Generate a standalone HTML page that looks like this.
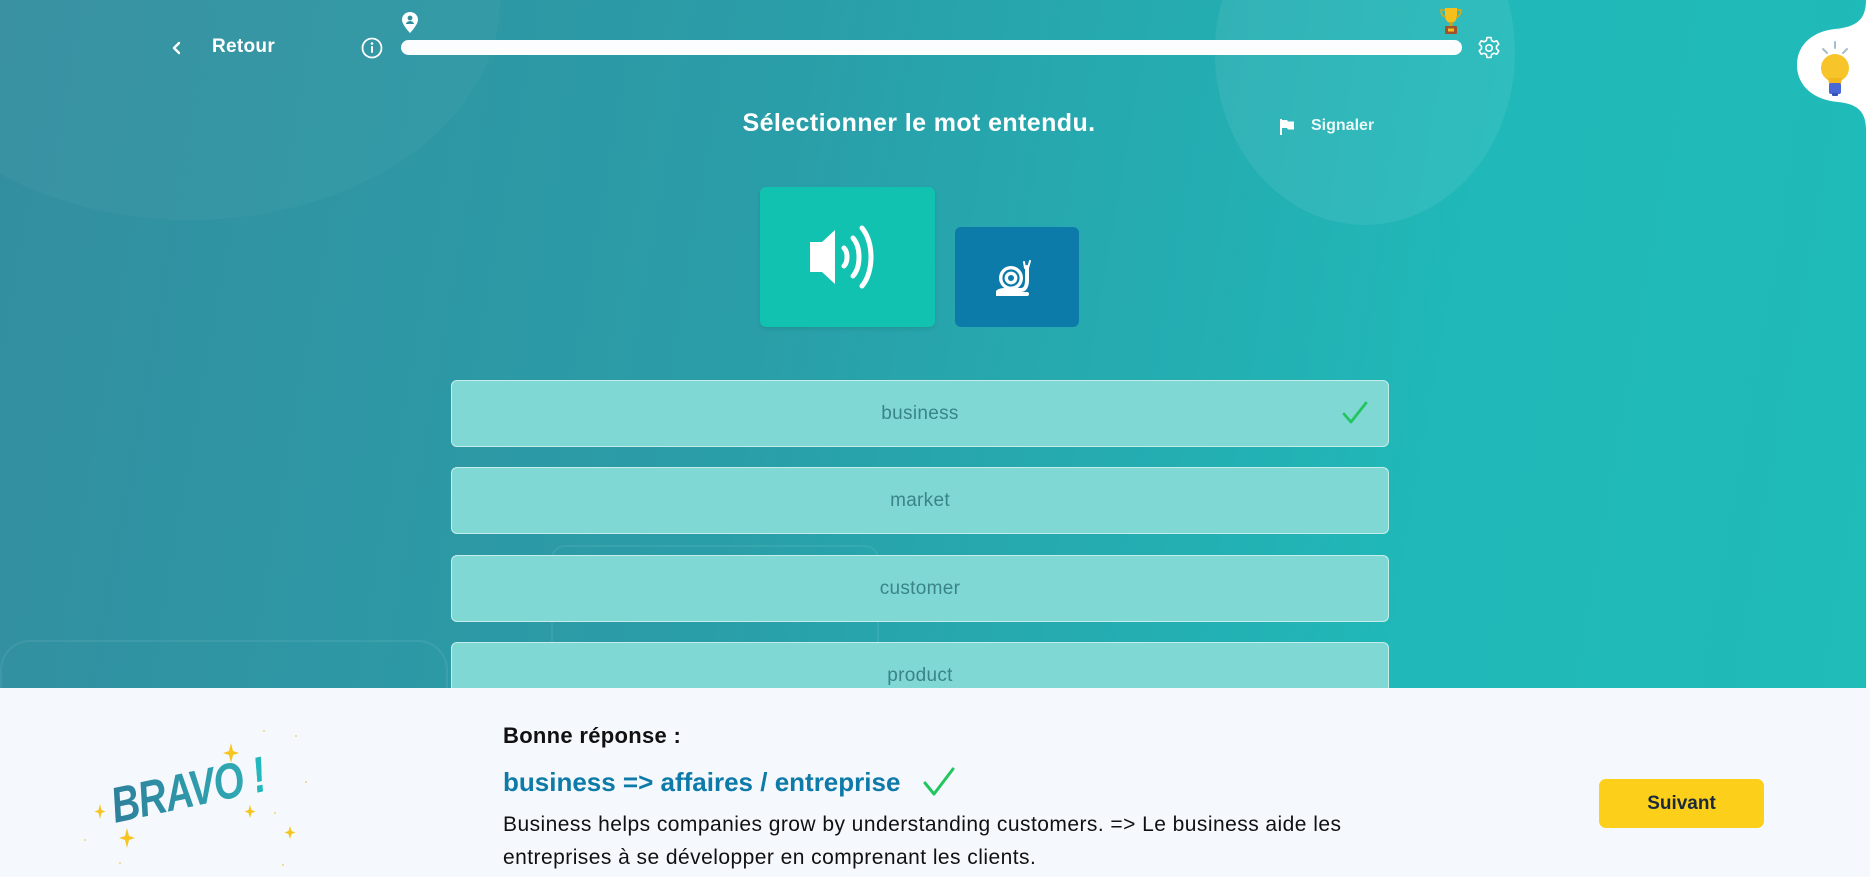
<!DOCTYPE html>
<html><head><meta charset="utf-8"><style>
*{margin:0;padding:0;box-sizing:border-box}
body{width:1870px;height:877px;overflow:hidden;font-family:"Liberation Sans",sans-serif;position:relative;background:linear-gradient(100deg,#338e9f 0%,#2a9ea8 40%,#20b8b8 75%,#1fbcb8 100%)}
.abs{position:absolute}
.opt{position:absolute;left:451px;width:938px;height:67px;background:#80d8d4;border:1px solid rgba(255,255,255,.55);border-radius:6px;color:#3a8489;font-size:19px;letter-spacing:.3px;text-align:center;line-height:65px}
</style></head><body>
<div class="abs" style="left:-120px;top:-220px;width:620px;height:440px;border-radius:50%;background:rgba(255,255,255,.03)"></div>
<div class="abs" style="left:1215px;top:-120px;width:300px;height:345px;border-radius:50%;background:rgba(255,255,255,.07)"></div>
<div class="abs" style="left:0;top:640px;width:448px;height:60px;border:2px solid rgba(255,255,255,.07);border-radius:30px 30px 0 0;border-bottom:none"></div>
<div class="abs" style="left:551px;top:545px;width:328px;height:160px;border:2px solid rgba(255,255,255,.07);border-radius:14px;border-bottom:none"></div>

<svg class="abs" style="left:170px;top:40px" width="14" height="16" viewBox="0 0 14 16"><path d="M9 3 L4 8 L9 13" stroke="#fff" stroke-width="2.4" fill="none" stroke-linecap="round" stroke-linejoin="round"/></svg>
<div class="abs" style="left:212px;top:36px;color:#fff;font-size:19px;font-weight:bold;letter-spacing:.3px">Retour</div>
<svg class="abs" style="left:361px;top:37px" width="22" height="22" viewBox="0 0 22 22"><circle cx="11" cy="11" r="9.5" stroke="#fff" stroke-width="1.8" fill="none"/><circle cx="11" cy="6.5" r="1.3" fill="#fff"/><rect x="10" y="9" width="2" height="7" rx="1" fill="#fff"/></svg>
<div class="abs" style="left:401px;top:40px;width:1061px;height:15px;border-radius:8px;background:#fbfdfe"></div>
<svg class="abs" style="left:402px;top:12px" width="16" height="21" viewBox="0 0 16 21"><path d="M8 0C3.6 0 0 3.4 0 7.7 0 12.5 8 21 8 21s8-8.5 8-13.3C16 3.4 12.4 0 8 0z" fill="#fff"/><circle cx="8" cy="6" r="2.4" fill="#2e8f9e"/><path d="M3.8 12c.8-2 2.4-3 4.2-3s3.4 1 4.2 3z" fill="#2e8f9e"/></svg>
<svg class="abs" style="left:1440px;top:7px" width="22" height="28" viewBox="0 0 22 28"><path d="M5 1h12v8c0 4-3 7-6 7s-6-3-6-7z" fill="#f5c01c"/><path d="M5 3H1c0 5 3 7 5 7M17 3h4c0 5-3 7-5 7" stroke="#e0a810" stroke-width="1.6" fill="none"/><rect x="9.5" y="15" width="3" height="4" fill="#d9a012"/><rect x="5" y="19" width="12" height="8" rx="1" fill="#a0522d"/><rect x="8" y="21.5" width="6" height="3" fill="#f5c01c"/></svg>
<svg class="abs" style="left:1477px;top:36px" width="24" height="24" viewBox="0 0 24 24"><path d="M10 1.5h4l.6 3 2.3 1.3 2.9-1 2 3.4-2.3 2v2.6l2.3 2-2 3.4-2.9-1-2.3 1.3-.6 3h-4l-.6-3-2.3-1.3-2.9 1-2-3.4 2.3-2v-2.6l-2.3-2 2-3.4 2.9 1 2.3-1.3z" stroke="#fff" stroke-width="1.6" fill="none" stroke-linejoin="round"/><circle cx="12" cy="12" r="3.2" stroke="#fff" stroke-width="1.6" fill="none"/></svg>

<svg class="abs" style="left:1790px;top:0" width="80" height="700" viewBox="0 0 80 700"><path d="M80 0 L80 700 L76 700 L76 130 C76 110 66 104 48 102 C25 100 7 87 7 65 C7 43 25 31 45 29 C66 27 76 20 76 0 Z" fill="#fff"/>
<g transform="translate(45,70)"><line x1="-12" y1="-21" x2="-8" y2="-17" stroke="#a8bccc" stroke-width="2" stroke-linecap="round"/><line x1="0" y1="-28" x2="0" y2="-22" stroke="#a8bccc" stroke-width="2" stroke-linecap="round"/><line x1="12" y1="-21" x2="8" y2="-17" stroke="#a8bccc" stroke-width="2" stroke-linecap="round"/><circle cx="0" cy="-2" r="14" fill="#f7c42a"/><path d="M-7 8h14l-1 6h-12z" fill="#f0b81e"/><rect x="-6" y="13" width="12" height="11" rx="2" fill="#4a67d6"/><rect x="-3" y="23" width="6" height="3" rx="1" fill="#3651b8"/></g></svg>

<div class="abs" style="left:580px;width:678px;top:109px;text-align:center;color:#fff;font-size:25px;font-weight:bold;letter-spacing:.4px">Sélectionner le mot entendu.</div>
<svg class="abs" style="left:1279px;top:118px" width="18" height="18" viewBox="0 0 18 18"><path d="M2 1v16" stroke="#fff" stroke-width="2"/><path d="M3 2h5l1 1.5h6v8H9l-1-1.5H3z" fill="#fff"/></svg>
<div class="abs" style="left:1311px;top:117px;color:#eafaf9;font-size:16px;font-weight:bold">Signaler</div>

<div class="abs" style="left:760px;top:187px;width:175px;height:140px;border-radius:6px;background:#12c2b0;box-shadow:0 2px 4px rgba(0,0,0,.1)"></div>
<svg class="abs" style="left:808px;top:224px" width="80" height="66" viewBox="0 0 80 66"><path d="M2 18h12l13-12v54L14 48H2z" fill="#fff"/><path d="M36 24c4 4 4 14 0 18" stroke="#fff" stroke-width="5" fill="none" stroke-linecap="round"/><path d="M45 14c8 9 8 29 0 38" stroke="#fff" stroke-width="5" fill="none" stroke-linecap="round"/><path d="M54 4c12 14 12 44 0 58" stroke="#fff" stroke-width="5" fill="none" stroke-linecap="round"/></svg>
<div class="abs" style="left:955px;top:227px;width:124px;height:100px;border-radius:6px;background:#0c7ba9"></div>
<svg class="abs" style="left:996px;top:259px" width="44" height="38" viewBox="0 0 44 38"><circle cx="15" cy="19" r="12" fill="#fff"/><circle cx="15" cy="19" r="7.5" fill="none" stroke="#0c7ba9" stroke-width="2.2"/><circle cx="15" cy="19" r="3" fill="#0c7ba9"/><path d="M1 35c0-3 4-4 8-4h16c4 0 6-4 6-10V8" stroke="#fff" stroke-width="4" fill="none" stroke-linecap="round"/><path d="M32 9l2-7M29 9l-1-6" stroke="#fff" stroke-width="2" stroke-linecap="round"/><path d="M1 35h30" stroke="#fff" stroke-width="4" stroke-linecap="round"/></svg>

<div class="opt" style="top:380px">business<svg style="position:absolute;right:20px;top:20px" width="26" height="24" viewBox="0 0 26 24"><path d="M2 13l7 8L24 2" stroke="#22c55e" stroke-width="2.8" fill="none" stroke-linecap="round" stroke-linejoin="round"/></svg></div>
<div class="opt" style="top:467px">market</div>
<div class="opt" style="top:555px">customer</div>
<div class="opt" style="top:642px">product</div>

<div class="abs" style="left:0;top:688px;width:1870px;height:189px;background:#f5f8fc"></div>
<div class="abs" style="left:188px;top:790px;transform:translate(-50%,-50%) rotate(-12deg) scaleX(.78);font-size:50px;font-weight:900;font-style:italic;letter-spacing:-1px;white-space:nowrap;background:linear-gradient(90deg,#2e7f9b,#2fb0b8);-webkit-background-clip:text;color:transparent">BRAVO<span style="color:#22b8bd"> !</span></div>
<svg class="abs" style="left:70px;top:720px" width="250" height="150" viewBox="0 0 250 150"><g fill="#f7c51f"><path d="M161 23l2 8 6 2-6 2-2 8-2-8-6-2 6-2z"/><path d="M57 108l2 8 6 2-6 2-2 8-2-8-6-2 6-2z"/><path d="M180 85l1.5 5 4 1.5-4 1.5-1.5 5-1.5-5-4-1.5 4-1.5z"/><path d="M220 106l1.5 5 4 1.5-4 1.5-1.5 5-1.5-5-4-1.5 4-1.5z"/><path d="M30 84l1.5 6 4 1.5-4 1.5-1.5 6-1.5-6-4-1.5 4-1.5z"/></g><g fill="#f2d27a"><circle cx="194" cy="11" r="1"/><circle cx="226" cy="16" r="1"/><circle cx="236" cy="62" r="1"/><circle cx="15" cy="120" r="1"/><circle cx="213" cy="145" r="1"/><circle cx="50" cy="143" r="1"/><circle cx="205" cy="93" r="1"/></g></svg>

<div class="abs" style="left:503px;top:723px;font-size:22px;font-weight:bold;letter-spacing:.3px;color:#111">Bonne réponse :</div>
<div class="abs" style="left:503px;top:767px;font-size:26px;font-weight:bold;color:#0e7aa8">business =&gt; affaires / entreprise</div>
<svg class="abs" style="left:922px;top:766px" width="34" height="32" viewBox="0 0 34 32"><path d="M3 17l9 11L31 3" stroke="#22c55e" stroke-width="3" fill="none" stroke-linecap="round" stroke-linejoin="round"/></svg>
<div class="abs" style="left:503px;top:808px;width:960px;font-size:21px;letter-spacing:.45px;line-height:33px;color:#111">Business helps companies grow by understanding customers. =&gt; Le business aide les<br>entreprises à se développer en comprenant les clients.</div>
<div class="abs" style="left:1599px;top:779px;width:165px;height:49px;border-radius:7px;background:#fccf1a;color:#1a2a3a;font-size:19px;font-weight:bold;text-align:center;line-height:49px">Suivant</div>
</body></html>
